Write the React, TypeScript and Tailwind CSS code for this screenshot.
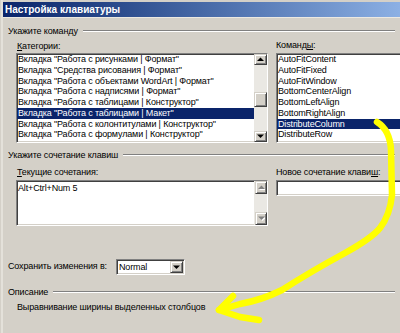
import React from "react";

const sunken =
  "border border-t-[#808080] border-l-[#808080] border-r-white border-b-white shadow-[inset_1px_1px_0_#404040,inset_-1px_-1px_0_#d4d0c8]";
const raised =
  "bg-[#d4d0c8] border border-t-[#d4d0c8] border-l-[#d4d0c8] border-r-[#404040] border-b-[#404040] shadow-[inset_1px_1px_0_#ffffff,inset_-1px_-1px_0_#808080]";

function Arrow({ dir, disabled }: { dir: "up" | "down"; disabled?: boolean }) {
  const pts = dir === "up" ? "0,4 7,4 3.5,0.5" : "0,0.5 7,0.5 3.5,4";
  return (
    <svg width="7" height="5" viewBox="0 0 7 5" className="block">
      {disabled && (
        <polygon points={pts} fill="#ffffff" transform="translate(1,1)" />
      )}
      <polygon points={pts} fill={disabled ? "#808080" : "#000000"} />
    </svg>
  );
}

function ScrollBtn({ dir, h, disabled }: { dir: "up" | "down"; h: string; disabled?: boolean }) {
  return (
    <div className={`${raised} ${h} w-full flex items-center justify-center`}>
      <Arrow dir={dir} disabled={disabled} />
    </div>
  );
}

const categories = [
  'Вкладка "Работа с рисунками | Формат"',
  'Вкладка "Средства рисования | Формат"',
  'Вкладка "Работа с объектами WordArt | Формат"',
  'Вкладка "Работа с надписями | Формат"',
  'Вкладка "Работа с таблицами | Конструктор"',
  'Вкладка "Работа с таблицами | Макет"',
  'Вкладка "Работа с колонтитулами | Конструктор"',
  'Вкладка "Работа с формулами | Конструктор"',
];

const commands = [
  "AutoFitContent",
  "AutoFitFixed",
  "AutoFitWindow",
  "BottomCenterAlign",
  "BottomLeftAlign",
  "BottomRightAlign",
  "DistributeColumn",
  "DistributeRow",
];

function Row({ text, selected }: { text: string; selected?: boolean }) {
  return (
    <div
      className={`h-[10.75px] leading-[10.75px] pl-[1px] whitespace-nowrap overflow-hidden ${
        selected ? "bg-[#0a246a] text-white" : ""
      }`}
    >
      {text}
    </div>
  );
}

function GroupHeader({ text }: { text: string }) {
  return (
    <div className="h-[10px] flex items-center gap-[5px]">
      <span className="whitespace-nowrap leading-[10px]">{text}</span>
      <div className="flex-1 h-[2px] border-t border-t-[#808080] border-b border-b-white mt-[-1px]" />
    </div>
  );
}

export default function App() {
  return (
    <div className="relative w-[400px] h-[333px] overflow-hidden bg-[#d4d0c8] text-black text-[9px] tracking-[-0.15px] font-['Liberation_Sans',Arial,sans-serif]">
      <div className="flex h-full">
        <div className="w-[3px] h-full bg-[#e4e1da] border-l border-[#d4d0c8]" />
        <div className="flex-1 flex flex-col pt-[2px] min-w-0">
          {/* Title bar */}
          <div className="h-[15px] flex items-center pl-[2px] bg-gradient-to-r from-[#0a246a] to-[#8cb0e4]">
            <span className="text-white font-bold text-[10px] tracking-normal leading-[15px] whitespace-nowrap">
              Настройка клавиатуры
            </span>
          </div>
          <div className="h-[1px] bg-[#ece9e2]" />

          {/* Body */}
          <div className="px-[5px] flex flex-col">
            <div className="mt-[8px]">
              <GroupHeader text="Укажите команду" />
            </div>

            <div className="pl-[8px] flex gap-[8px] mt-[5px] w-[600px]">
              <div className="w-[252px] flex flex-col">
                <div className="h-[10px] leading-[10px] pl-[1px]">
                  <span className="underline">К</span>атегории:
                </div>
                <div className={`${sunken} mt-[2px] h-[90px] bg-white flex`}>
                  <div className="flex-1 min-w-0 flex flex-col">
                    {categories.map((c, i) => (
                      <Row key={i} text={c} selected={i === 5} />
                    ))}
                  </div>
                  <div className="w-[13px] flex flex-col bg-[#eae8e3]">
                    <ScrollBtn dir="up" h="h-[11px]" />
                    <div className="flex-1 flex flex-col">
                      <div className="h-[27px]" />
                      <div className={`${raised} h-[15px] w-full`} />
                    </div>
                    <ScrollBtn dir="down" h="h-[11px]" />
                  </div>
                </div>
              </div>
              <div className="w-[200px] flex flex-col">
                <div className="h-[10px] leading-[10px] mt-[-1px]">
                  Команд<span className="underline">ы</span>:
                </div>
                <div className={`${sunken} mt-[3px] h-[90px] bg-white flex flex-col`}>
                  {commands.map((c, i) => (
                    <Row key={i} text={c} selected={i === 6} />
                  ))}
                </div>
              </div>
            </div>

            <div className="mt-[7px]">
              <GroupHeader text="Укажите сочетание клавиш" />
            </div>

            <div className="pl-[8px] flex gap-[8px] mt-[7px] w-[600px]">
              <div className="w-[252px] flex flex-col">
                <div className="h-[10px] leading-[10px] pl-[1px]">
                  <span className="underline">Т</span>екущие сочетания:
                </div>
                <div className={`${sunken} mt-[3px] h-[46px] bg-white flex`}>
                  <div className="flex-1 min-w-0 flex flex-col pt-[2px]">
                    <Row text="Alt+Ctrl+Num 5" />
                  </div>
                  <div className="w-[13px] flex flex-col bg-[#eae8e3] pl-[1px]">
                    <ScrollBtn dir="up" h="h-[13px]" disabled />
                    <div className="flex-1" />
                    <ScrollBtn dir="down" h="h-[13px]" disabled />
                  </div>
                </div>
              </div>
              <div className="w-[200px] flex flex-col">
                <div className="h-[10px] leading-[10px]">
                  Новое сочетание клави<span className="underline">ш</span>:
                </div>
                <div className={`${sunken} mt-[3px] h-[16px] bg-white`} />
              </div>
            </div>

            <div className="mt-[33px] h-[16px] flex items-center">
              <div className="w-[108px] whitespace-nowrap">Сохранить изменения в:</div>
              <div className={`${sunken} w-[69px] h-[16px] bg-white flex items-center`}>
                <div className="flex-1 pl-[2px] leading-[12px]">Normal</div>
                <div className={`${raised} w-[13px] h-[12px] mr-[1px] flex items-center justify-center`}>
                  <Arrow dir="down" />
                </div>
              </div>
            </div>

            <div className="mt-[12px]">
              <GroupHeader text="Описание" />
            </div>

            <div className="mt-[5px] h-[10px] leading-[10px] pl-[9px] whitespace-nowrap">
              Выравнивание ширины выделенных столбцов
            </div>
          </div>
        </div>
      </div>

      {/* Yellow annotation arrow */}
      <svg
        className="absolute inset-0 pointer-events-none"
        width="400"
        height="333"
        viewBox="0 0 400 333"
      >
        <path
          d="M377 122 Q390 130 391 150 L392 195 Q390 215 380 228 Q372 238 345 253 Q310 272 282 290 Q262 300 240 304 L219 310"
          fill="none"
          stroke="#ffff00"
          strokeWidth="6.5"
          strokeLinecap="round"
          strokeLinejoin="round"
        />
        <path
          d="M233 296 L219 310 L240 317 L259 320"
          fill="none"
          stroke="#ffff00"
          strokeWidth="6.5"
          strokeLinecap="round"
          strokeLinejoin="round"
        />
      </svg>
    </div>
  );
}
